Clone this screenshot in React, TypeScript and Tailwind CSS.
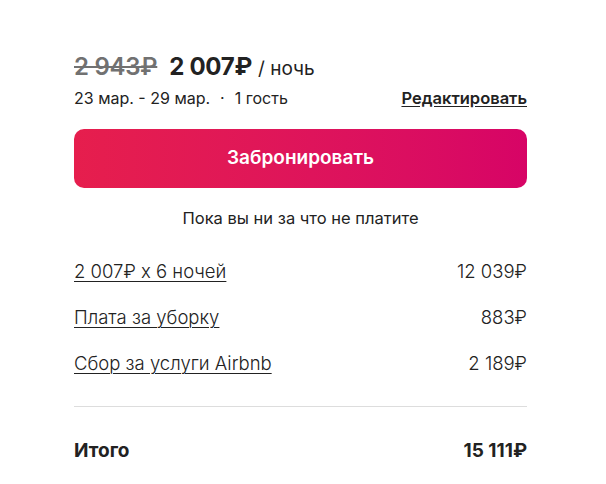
export default function App() {
  const rows = [
    { label: "2 007₽ x 6 ночей", value: "12 039₽" },
    { label: "Плата за уборку", value: "883₽" },
    { label: "Сбор за услуги Airbnb", value: "2 189₽" },
  ]

  return (
    <div
      className="w-[606px] h-[484px] bg-white text-[#222222] pl-[74px] pr-[79px] pt-[49px]"
      style={{ fontFamily: "Inter, 'Noto Sans', sans-serif" }}
    >
      <div className="flex items-baseline">
        <span className="text-[24px] font-semibold text-[#717171] line-through tracking-[-0.3px]">2 943₽</span>
        <span className="ml-[12px] text-[24px] font-bold tracking-[-0.3px]">2 007₽</span>
        <span className="ml-[6px] text-[19px]">/ ночь</span>
      </div>
      <div className="flex items-center justify-between mt-[3px] text-[16px] leading-[20px]">
        <span>
          23 мар. - 29 мар.
          <span className="mx-[10px]">·</span>1 гость
        </span>
        <span className="text-[16.5px] font-semibold underline underline-offset-2">Редактировать</span>
      </div>

      <button className="mt-[21px] w-full h-[59px] rounded-[10px] bg-gradient-to-r from-[#e61e4d] to-[#d70466] text-white text-[19px] font-semibold">
        Забронировать
      </button>

      <p className="mt-[20px] text-center text-[16.5px] leading-[20px]">Пока вы ни за что не платите</p>

      <div className="mt-[32px] flex flex-col gap-[24px]">
        {rows.map((r) => (
          <div key={r.label} className="flex items-center justify-between text-[18.5px] leading-[22px] font-light">
            <span className="underline underline-offset-[3px] decoration-1">{r.label}</span>
            <span>{r.value}</span>
          </div>
        ))}
      </div>

      <div className="mt-[32px] border-t border-[#dddddd]" />

      <div className="mt-[33px] flex items-center justify-between text-[19px] leading-[22px] font-bold">
        <span>Итого</span>
        <span>15 111₽</span>
      </div>
    </div>
  )
}
